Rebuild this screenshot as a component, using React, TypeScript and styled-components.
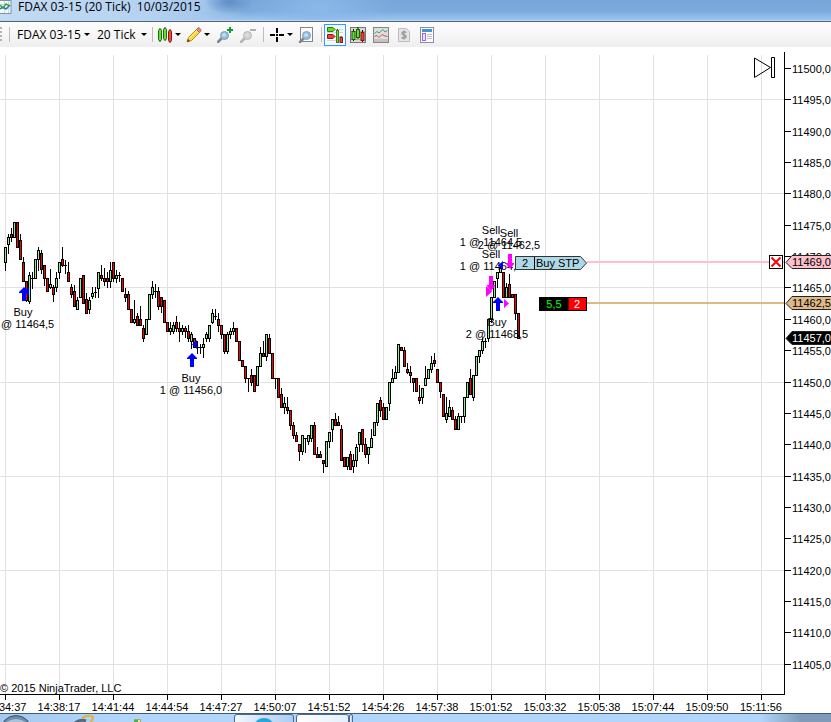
import React from "react";
import styled, { createGlobalStyle } from "styled-components";

const GlobalStyle = createGlobalStyle`
  *, *::before, *::after { box-sizing: border-box; }
  html, body { margin: 0; padding: 0; }
  body { background: #ffffff; overflow: hidden; }
  button, select { font: inherit; color: inherit; }
`;

const Window = styled.div`
  display: flex;
  flex-direction: column;
  height: 100vh;
  overflow: hidden;
  font-family: "Liberation Sans", Arial, sans-serif;
  font-size: 11px;
  color: #000000;
`;

/* ---------- title bar ---------- */

const TitleBar = styled.header`
  display: flex;
  align-items: center;
  gap: 6px;
  flex: none;
  height: 22px;
  padding-bottom: 7px;
  border-bottom: 1px solid #53647c;
  box-shadow: inset 0 -1px 0 #b9d7f3;
  background:
    radial-gradient(ellipse 24px 12px at 229px 2px, #5f8fc6 0%, rgba(95, 143, 198, 0) 100%),
    linear-gradient(90deg, #c3dbf3 0, #b4d2f1 150px, #a6c8ed 200px, rgba(150, 190, 233, 0) 245px),
    radial-gradient(ellipse 70px 30px at 320px 8px, #8bb9ea 0%, rgba(139, 185, 234, 0) 100%),
    linear-gradient(180deg, #7aa6da 0, #7caadd 11px, #9ac5ef 20px);
`;

const Title = styled.h1`
  margin: 0;
  font: 400 12px/14px "Open Sans", "Noto Sans", sans-serif;
  white-space: pre;
`;

/* ---------- toolbar ---------- */

const Toolbar = styled.nav`
  display: flex;
  align-items: center;
  flex: none;
  height: 25px;
  background: linear-gradient(180deg, #fcfcfc 0, #f7f7f7 12px, #eeeeee 25px);
  font: 400 12px/16px "Open Sans", "Noto Sans", sans-serif;
`;

const Grip = styled.span`
  width: 2px;
  height: 15px;
  margin-right: 7px;
  background: repeating-linear-gradient(180deg, #b4b4b4 0 2px, transparent 2px 4px);
`;

const Separator = styled.span<{ $before?: number }>`
  flex: none;
  width: 1px;
  height: 15px;
  margin-left: ${(p) => p.$before ?? 0}px;
  background: #bdbdbd;
`;

const Picker = styled.label<{ $width: number }>`
  display: grid;
  align-items: center;
  flex: none;
  width: ${(p) => p.$width}px;
  margin-left: 7px;

  > * { grid-area: 1 / 1; }
  > svg { justify-self: end; pointer-events: none; }
`;

const PickerSelect = styled.select`
  width: 100%;
  margin: 0;
  padding: 0;
  border: 0;
  appearance: none;
  background: transparent;
`;

const ToolButton = styled.button<{ $active?: boolean; $gap?: number }>`
  display: inline-flex;
  align-items: center;
  justify-content: center;
  gap: 2px;
  flex: none;
  min-width: 16px;
  height: 22px;
  margin: 0 0 0 ${(p) => p.$gap ?? 7}px;
  padding: 0 ${(p) => (p.$active ? 2 : 0)}px;
  border: ${(p) => (p.$active ? "1px solid #3399ff" : "0")};
  background: ${(p) => (p.$active ? "#f4f9ff" : "transparent")};
`;

const Caret = () => (
  <svg width="6" height="3" viewBox="0 0 6 3" aria-hidden="true">
    <path d="M0 0H6L3 3Z" fill="#000" />
  </svg>
);

const Icon = ({ children }: { children: React.ReactNode }) => (
  <svg width="16" height="16" viewBox="0 0 16 16" fill="none" aria-hidden="true">
    {children}
  </svg>
);

const LogoIcon = () => (
  <svg width="12" height="14" viewBox="0 0 12 14" fill="none" aria-hidden="true">
    <rect x="-3" y="0.5" width="14" height="13" fill="#f5f9fb" stroke="#7f93a6" />
    <path d="M0 4.5H11M0 8.5H11M4.5 1V13M8.500 1V13" stroke="#ccd8e0" />
    <path d="M0 9L3 7L6 9L10 5" stroke="#2f6fc4" strokeWidth="1.500" />
    <path d="M0 5L3 8L6 4L10 6" stroke="#3ca640" strokeWidth="1.500" />
  </svg>
);

const BarsIcon = () => (
  <Icon>
    <path d="M3 1V15M8 0V14M13 2V16" stroke="#222" />
    <rect x="1.500" y="2.500" width="3" height="11" rx="1" fill="#66e32c" stroke="#1f6d12" />
    <rect x="6.500" y="1.500" width="3" height="11" rx="1" fill="#66e32c" stroke="#1f6d12" />
    <rect x="11.500" y="3.500" width="3" height="11" rx="1" fill="#f04a40" stroke="#8a1712" />
  </Icon>
);

const PencilIcon = () => (
  <Icon>
    <path d="M1 15L2.500 10.500L10.500 2.500L13.500 5.500L5.500 13.500Z" fill="#ffd93b" stroke="#b38b18" />
    <path d="M3.500 11L11.500 3" stroke="#fff2a0" />
    <path d="M10.500 2.500L12 1Q13 .5 14 1.500L15 2.700Q15.300 3.500 13.500 5.500Z" fill="#ef8b83" stroke="#a9625c" />
    <path d="M1 15L2 12L4 14Z" fill="#444" />
  </Icon>
);

const Lens = ({ muted, x = 0 }: { muted?: boolean; x?: number }) => (
  <g transform={`translate(${x} 0)`}>
    <path d="M1 15L5 11" stroke={muted ? "#b5b5b5" : "#7d8790"} strokeWidth="2.500" strokeLinecap="round" />
    <circle cx="7.500" cy="8.500" r="4" fill={muted ? "#d2d2d2" : "#8fc1e8"} stroke={muted ? "#b8b8b8" : "#8c9bab"} />
    <circle cx="7" cy="8" r="1.800" fill={muted ? "#dddddd" : "#c2e2f8"} />
  </g>
);

const ZoomInIcon = () => (
  <Icon>
    <Lens />
    <path d="M13 0V6M10 3H16" stroke="#0aa22c" strokeWidth="2" />
  </Icon>
);

const ZoomOutIcon = () => (
  <Icon>
    <Lens muted />
    <path d="M10 3H16" stroke="#b0b0b0" strokeWidth="2" />
  </Icon>
);

const CrosshairIcon = () => (
  <Icon>
    <path d="M8 1V6M8 10V15M1 8H6M10 8H15" stroke="#000" strokeWidth="2" />
    <rect x="7" y="7" width="2" height="2" fill="#000" />
  </Icon>
);

const PageZoomIcon = () => (
  <Icon>
    <rect x="2.500" y=".5" width="12" height="14" fill="#fbfbfb" stroke="#858585" />
    <Lens x={1} />
  </Icon>
);

const TraderIcon = () => (
  <Icon>
    <path d="M6 2.500H16M0 5.500H16M6 9.500H16M0 13.500H16" stroke="#d6d6d6" />
    <path d="M.5 .5H6L8 2.500L6 4.500H.5Z" fill="#5fdf23" stroke="#277914" />
    <path d="M.5 7.500H6L8 9.500L6 11.500H.5Z" fill="#ef3f35" stroke="#8d1b15" />
    <path d="M10.500 2V16M14 9V16" stroke="#333" />
    <rect x="9.500" y="3.500" width="2" height="12" fill="#65df2b" stroke="#3b7c26" />
    <rect x="13" y="10.500" width="2.500" height="5" fill="#ef4a40" stroke="#8d1b15" />
  </Icon>
);

const FrameIcon = () => (
  <Icon>
    <rect x=".5" y=".5" width="15" height="15" fill="#d9d9d9" stroke="#777" />
    <path d="M1 4.500H15M1 8.500H15M1 12.500H15" stroke="#aaa" />
    <path d="M3.500 2V14M8 0V12M12.500 3V15" stroke="#111" />
    <rect x="2" y="4.500" width="3" height="8" fill="#61dd29" stroke="#185d0d" />
    <rect x="6.500" y="2.500" width="3" height="8" fill="#61dd29" stroke="#185d0d" />
    <rect x="11" y="5.500" width="3" height="8" fill="#ef4036" stroke="#7d1510" />
  </Icon>
);

const IndicatorIcon = () => (
  <Icon>
    <rect x=".5" y=".5" width="15" height="15" fill="#dedede" stroke="#858585" />
    <path d="M1 12H15V15H1Z" fill="#c3c3c3" />
    <path d="M1.500 6.500L4 4.500L6 6L10 2.500L12 5L14.500 3.500" stroke="#38a874" />
    <path d="M1.500 9.500L4 8.500L6 10.500L9 7.500L12 9L14.500 9.500" stroke="#e04c48" />
  </Icon>
);

const StrategyIcon = () => (
  <Icon>
    <path d="M2.500 1.500H10.500L13.500 4.500V14.500H2.500Z" fill="#e5e5e5" stroke="#bdbdbd" />
    <path d="M10.500 5.500Q8 3.800 6.300 5.500Q5.300 7.500 8 8Q11 8.500 9.700 10.500Q8 12 5.500 10.500M8 3.500V12.500" stroke="#9c9c9c" strokeWidth="1.500" />
  </Icon>
);

const PropertiesIcon = () => (
  <Icon>
    <rect x="1.500" y=".5" width="13" height="15" fill="#fbfbfd" stroke="#8a8fa3" />
    <rect x="3" y="2" width="10" height="3" fill="#3d97d2" />
    <rect x="3.500" y="6.500" width="3" height="7" fill="#efe5ff" stroke="#9a64ee" />
    <path d="M8 7.500H13M8 9.500H13M8 11.500H13" stroke="#b7bfcc" />
  </Icon>
);

/* ---------- chart ---------- */

const ChartArea = styled.main`
  display: grid;
  grid-template-columns: minmax(0, 1fr) 46px;
  grid-template-rows: minmax(0, 1fr) 18px;
  flex: 1;
  min-height: 0;
  padding-top: 5px;
  background: #ffffff;
`;

const Plot = styled.section`
  position: relative;
  overflow: hidden;
  border-right: 1px solid #000000;
  border-bottom: 1px solid #000000;
`;

const Drawing = styled.svg`
  display: block;
  width: 100%;
  height: 100%;
  overflow: hidden;
`;

const OverlayButton = styled.button<{ $top: number; $right: number }>`
  position: absolute;
  top: ${(p) => p.$top}px;
  right: ${(p) => p.$right}px;
  display: flex;
  padding: 0;
  border: 0;
  background: transparent;
`;

const TOP = 52;
const FIRST_X = 5;
const COLUMN = 54;

type Candle = [kind: "G" | "R", high: number, top: number, bottom: number, low: number];

const candles: Candle[] = [
  ["G", 247, 247, 262, 270], ["G", 234, 237, 244, 253], ["R", 228, 234, 237, 241], ["G", 222, 222, 237, 237],
  ["R", 222, 222, 247, 247], ["R", 234, 240, 259, 259], ["R", 257, 262, 281, 281], ["R", 281, 281, 300, 301],
  ["G", 272, 275, 301, 303], ["R", 272, 278, 278, 288], ["G", 259, 259, 278, 278], ["G", 247, 250, 259, 270],
  ["R", 250, 253, 269, 273], ["R", 265, 265, 278, 285], ["R", 278, 278, 291, 291], ["G", 269, 284, 287, 288],
  ["R", 285, 287, 294, 301], ["G", 272, 278, 287, 291], ["G", 262, 262, 272, 278], ["R", 247, 259, 265, 266],
  ["G", 260, 265, 265, 273], ["R", 262, 272, 281, 281], ["R", 284, 287, 294, 297], ["R", 285, 291, 306, 306],
  ["G", 297, 300, 309, 309], ["G", 278, 278, 297, 297], ["R", 275, 275, 303, 303], ["R", 293, 299, 313, 313],
  ["G", 297, 300, 309, 313], ["G", 287, 293, 296, 298], ["R", 287, 292, 292, 297], ["G", 272, 272, 288, 297],
  ["R", 265, 275, 278, 280], ["R", 268, 278, 281, 285], ["R", 272, 278, 281, 287], ["G", 262, 270, 281, 287],
  ["R", 262, 262, 278, 281], ["G", 270, 275, 278, 282], ["R", 272, 275, 275, 281], ["R", 278, 278, 291, 291],
  ["R", 288, 294, 297, 301], ["R", 291, 294, 309, 309], ["R", 309, 309, 322, 322], ["G", 300, 319, 322, 323],
  ["R", 313, 316, 325, 325], ["R", 306, 319, 325, 325], ["R", 325, 328, 338, 341], ["G", 319, 319, 334, 334],
  ["G", 294, 294, 319, 319], ["G", 281, 287, 294, 298], ["R", 284, 291, 291, 297], ["R", 287, 291, 306, 309],
  ["R", 297, 297, 306, 312], ["R", 300, 300, 322, 322], ["R", 322, 322, 331, 331], ["G", 322, 328, 331, 334],
  ["G", 322, 325, 331, 333], ["R", 316, 322, 328, 331], ["R", 322, 328, 331, 341], ["G", 325, 328, 331, 334],
  ["R", 326, 328, 331, 337], ["R", 325, 331, 338, 341], ["G", 332, 334, 341, 348], ["R", 338, 338, 347, 347],
  ["R", 341, 347, 347, 353], ["R", 344, 347, 347, 353], ["G", 338, 344, 347, 357], ["G", 332, 334, 338, 341],
  ["G", 325, 325, 338, 341], ["G", 309, 313, 322, 323], ["R", 309, 316, 316, 319], ["R", 313, 319, 325, 331],
  ["R", 325, 325, 334, 338], ["R", 334, 334, 351, 353], ["G", 332, 334, 351, 353], ["G", 328, 331, 334, 338],
  ["G", 322, 328, 331, 334], ["R", 328, 328, 341, 341], ["R", 341, 341, 360, 360], ["R", 360, 360, 366, 366],
  ["R", 366, 366, 378, 382], ["R", 378, 378, 378, 391], ["R", 369, 375, 382, 385], ["R", 375, 375, 391, 391],
  ["G", 366, 366, 385, 385], ["G", 347, 353, 366, 366], ["R", 341, 353, 356, 356], ["G", 334, 334, 356, 360],
  ["R", 334, 338, 353, 353], ["R", 353, 353, 378, 378], ["R", 378, 378, 378, 388], ["R", 378, 378, 397, 397],
  ["R", 388, 394, 407, 407], ["G", 397, 403, 407, 413], ["R", 397, 407, 410, 413], ["R", 410, 410, 425, 429],
  ["R", 422, 425, 435, 438], ["R", 432, 435, 441, 441], ["R", 444, 444, 451, 460], ["G", 435, 435, 451, 454],
  ["R", 438, 438, 438, 452], ["G", 435, 435, 441, 444], ["G", 425, 425, 438, 441], ["R", 422, 425, 454, 454],
  ["R", 447, 454, 457, 457], ["R", 451, 454, 457, 457], ["R", 460, 460, 463, 472], ["G", 441, 441, 466, 466],
  ["G", 432, 432, 441, 447], ["G", 419, 419, 429, 441], ["R", 413, 419, 425, 425], ["R", 416, 422, 425, 425],
  ["R", 425, 429, 460, 460], ["R", 457, 457, 466, 466], ["G", 457, 457, 466, 469], ["R", 451, 454, 469, 469],
  ["G", 454, 460, 466, 472], ["G", 444, 447, 460, 466], ["G", 432, 432, 444, 451], ["R", 429, 429, 444, 451],
  ["R", 438, 444, 454, 457], ["G", 447, 447, 454, 463], ["G", 429, 438, 447, 447], ["G", 422, 422, 435, 435],
  ["G", 403, 403, 422, 425], ["R", 397, 400, 410, 416], ["R", 403, 407, 419, 419], ["G", 407, 407, 419, 419],
  ["G", 382, 382, 403, 410], ["G", 369, 378, 382, 382], ["G", 366, 372, 378, 378], ["G", 344, 344, 372, 372],
  ["R", 347, 347, 350, 350], ["R", 347, 350, 366, 366], ["R", 363, 369, 372, 373], ["R", 366, 372, 375, 382],
  ["R", 378, 378, 382, 391], ["R", 378, 378, 391, 391], ["R", 385, 397, 400, 403], ["G", 388, 388, 397, 403],
  ["G", 366, 378, 385, 385], ["G", 369, 369, 378, 378], ["G", 356, 363, 369, 372], ["R", 353, 360, 363, 366],
  ["R", 369, 369, 382, 382], ["R", 382, 382, 391, 397], ["R", 394, 394, 416, 416], ["G", 397, 413, 419, 422],
  ["G", 400, 407, 416, 416], ["R", 407, 410, 419, 419], ["R", 416, 419, 429, 429], ["G", 413, 416, 429, 429],
  ["R", 416, 416, 416, 422], ["G", 397, 397, 416, 422], ["G", 382, 382, 397, 397], ["R", 369, 378, 394, 394],
  ["G", 375, 375, 397, 400], ["G", 356, 356, 375, 375], ["G", 350, 350, 356, 362], ["G", 338, 341, 350, 353],
  ["R", 338, 341, 341, 347], ["G", 319, 319, 338, 341], ["G", 297, 297, 319, 322], ["G", 281, 281, 297, 297],
  ["G", 272, 272, 278, 287], ["G", 265, 268, 272, 272], ["R", 272, 272, 297, 297], ["G", 283, 287, 297, 297],
  ["R", 274, 284, 297, 297], ["R", 294, 294, 297, 297], ["R", 294, 294, 313, 319], ["R", 313, 313, 338, 338],
];

const times = [
  "14:34:37", "14:38:17", "14:41:44", "14:44:54", "14:47:27", "14:50:07", "14:51:52", "14:54:26",
  "14:57:38", "15:01:52", "15:03:32", "15:05:38", "15:07:44", "15:09:50", "15:11:56",
];

const executions = [
  { x: 23, y: 316, side: "Buy", text: "1 @ 11464,5" },
  { x: 191, y: 382, side: "Buy", text: "1 @ 11456,0" },
  { x: 491, y: 234, side: "Sell", text: "1 @ 11464,5" },
  { x: 509, y: 237, side: "Sell", text: "2 @ 11462,5" },
  { x: 491, y: 258, side: "Sell", text: "1 @ 11464,5" },
  { x: 497, y: 326, side: "Buy", text: "2 @ 11468,5" },
];

const priceTags = [
  { y: 262, text: "11469,0", fill: "#ffc0cb", ink: "#000" },
  { y: 303, text: "11462,5", fill: "#deb887", ink: "#000" },
  { y: 338, text: "11457,0", fill: "#000", ink: "#fff" },
];

const priceY = (index: number) => Math.floor(68.5 + index * 31.35);

const CandleMark = ({ index, candle }: { index: number; candle: Candle }) => {
  const [kind, high, top, bottom, low] = candle;
  const x = FIRST_X + index * 3;
  return (
    <g>
      <rect x={x} y={high} width="1" height={low - high + 1} fill="#000" />
      <rect x={x - 1} y={top} width="3" height={bottom - top + 1} fill="#000" />
      {bottom - top > 1 && (
        <rect x={x} y={top + 1} width="1" height={bottom - top - 1} fill={kind === "G" ? "#90ee90" : "#ff0000"} />
      )}
    </g>
  );
};

const UpArrow = ({ x, y }: { x: number; y: number }) => (
  <path d={`M${x} ${y}l5 5v1h-3v8h-4v-8h-3v-1Z`} fill="#0000ff" />
);

const DownArrow = ({ x, y }: { x: number; y: number }) => (
  <path d={`M${x - 2} ${y}h4v9h2v1l-4 5l-4 -5v-1h2Z`} fill="#ff00ff" />
);

const PlotDrawing = () => (
  <Drawing role="img" aria-label="FDAX 03-15 price chart" fontSize="11">
    <g transform={`translate(0 ${-TOP})`}>
      <g stroke="#e1e1e1" shapeRendering="crispEdges">
        {Array.from({ length: 40 }, (_, i) => (
          <line key={i} x1={FIRST_X + i * COLUMN + 0.5} x2={FIRST_X + i * COLUMN + 0.5} y1={55} y2={4000} />
        ))}
        {Array.from({ length: 7 }, (_, i) => (
          <line key={i} x1="0" x2="100%" y1={priceY(1 + i * 3) + 0.5} y2={priceY(1 + i * 3) + 0.5} />
        ))}
      </g>
      <clipPath id="orders">
        <rect x="587" y="200" width="4000" height="200" />
      </clipPath>
      <rect x="0" y="261" width="100%" height="2" fill="#ffc0cb" clipPath="url(#orders)" />
      <rect x="0" y="302" width="100%" height="2" fill="#deb887" clipPath="url(#orders)" />
      <g shapeRendering="crispEdges">
        {candles.map((c, i) => (
          <CandleMark key={i} index={i} candle={c} />
        ))}
      </g>
      <g textAnchor="middle">
        {executions.map((e, i) => (
          <React.Fragment key={i}>
            <text x={e.x} y={e.y}>{e.side}</text>
            <text x={e.x} y={e.y + 12}>{e.text}</text>
          </React.Fragment>
        ))}
      </g>
      <UpArrow x={24} y={287} />
      <UpArrow x={192} y={353} />
      <UpArrow x={498} y={297} />
      <path d="M29 287V296L24 291.500ZM197 340V349L192 344.500ZM503 261V270L498 265.500Z" fill="#0000ff" />
      <DownArrow x={510} y={254} />
      <DownArrow x={491} y={276} />
      <path d="M486 286V297L492 291.500ZM504 299V308L509 303.500Z" fill="#ff00ff" />

      <path d="M515.500 256.500H580.500L586.500 263L580.500 269.500H515.500Z" fill="#add8e6" stroke="#333" />
      <path d="M534.500 257V269" stroke="#000" />
      <text x="525" y="267" textAnchor="middle">2</text>
      <text x="536" y="267">Buy STP</text>
      <rect x="539" y="297" width="29" height="14" fill="#000" />
      <rect x="568" y="297.500" width="18.500" height="13" fill="#ff0000" stroke="#000" />
      <text x="554" y="308" fill="#00ff00" textAnchor="middle">5,5</text>
      <text x="577" y="308" fill="#fff" textAnchor="middle">2</text>
    </g>
    <text x="0" y={692 - TOP}>© 2015 NinjaTrader, LLC</text>
  </Drawing>
);

const PriceAxis = () => (
  <Drawing role="img" aria-label="Price scale" fontSize="11">
    <g transform={`translate(0 ${-TOP})`}>
      {Array.from({ length: 20 }, (_, i) => (
        <g key={i}>
          <rect x="0" y={priceY(i)} width="6" height="1" fill="#000" />
          <text x="7" y={priceY(i) + 5}>{`${11500 - i * 5},0`}</text>
        </g>
      ))}
      {priceTags.map((t) => (
        <g key={t.text}>
          <path d={`M1 ${t.y + 0.5}L7 ${t.y - 6.5}H60V${t.y + 6.5}H7Z`} fill={t.fill} stroke="#222" />
          <text x="7" y={t.y + 4} fill={t.ink}>{t.text}</text>
        </g>
      ))}
    </g>
  </Drawing>
);

const TimeAxis = () => (
  <Drawing role="img" aria-label="Time scale" fontSize="11" textAnchor="middle">
    {times.map((t, i) => (
      <g key={t}>
        <rect x={FIRST_X + i * COLUMN} y="0" width="1" height="5" fill="#000" />
        <text x={FIRST_X + i * COLUMN} y="16">{t}</text>
      </g>
    ))}
  </Drawing>
);

/* ---------- task bar ---------- */

const TaskBar = styled.footer`
  display: flex;
  flex: none;
  height: 9px;
  overflow: hidden;
  border-top: 1px solid #3f5a7c;
  background: linear-gradient(90deg, #a5c9ef 0, #b2d5fb 120px, #b2d5fb calc(100% - 70px), #7f9bb9 calc(100% - 30px), #7f9bb9 100%);
`;

const TaskItem = styled.button<{ $width: number; $kind?: "framed" | "active" }>`
  display: flex;
  justify-content: center;
  flex: none;
  width: ${(p) => p.$width}px;
  height: 20px;
  padding: 0;
  border: ${(p) => (p.$kind ? "1px solid #4b6a8e" : "0")};
  border-radius: 3px;
  background: ${(p) =>
    p.$kind === "active"
      ? "linear-gradient(90deg, #ffffff, #e3effc)"
      : p.$kind === "framed"
        ? "linear-gradient(90deg, #f2f8ff, #a9cdf2)"
        : "transparent"};
`;

const TaskGap = styled.span`
  width: 2px;
`;

export default function App() {
  return (
    <Window>
      <GlobalStyle />
      <TitleBar>
        <LogoIcon />
        <Title>{"FDAX 03-15 (20 Tick)  10/03/2015"}</Title>
      </TitleBar>

      <Toolbar aria-label="Chart tools">
        <Grip />
        <Separator />
        <Picker $width={73}>
          <PickerSelect aria-label="Instrument" defaultValue="FDAX 03-15">
            <option>FDAX 03-15</option>
          </PickerSelect>
          <Caret />
        </Picker>
        <Picker $width={50}>
          <PickerSelect aria-label="Interval" defaultValue="20 Tick">
            <option>20 Tick</option>
          </PickerSelect>
          <Caret />
        </Picker>
        <Separator $before={5} />
        <ToolButton aria-label="Chart style" $gap={4}><BarsIcon /><Caret /></ToolButton>
        <ToolButton aria-label="Drawing tools" $gap={5}><PencilIcon /><Caret /></ToolButton>
        <ToolButton aria-label="Zoom in"><ZoomInIcon /></ToolButton>
        <ToolButton aria-label="Zoom out" disabled><ZoomOutIcon /></ToolButton>
        <Separator $before={7} />
        <ToolButton aria-label="Cursor" $gap={5}><CrosshairIcon /><Caret /></ToolButton>
        <ToolButton aria-label="Zoom window" $gap={5}><PageZoomIcon /></ToolButton>
        <Separator $before={7} />
        <ToolButton aria-label="Chart trader" $gap={2} $active><TraderIcon /></ToolButton>
        <ToolButton aria-label="Data series" $gap={4}><FrameIcon /></ToolButton>
        <ToolButton aria-label="Indicators"><IndicatorIcon /></ToolButton>
        <ToolButton aria-label="Strategies" disabled><StrategyIcon /></ToolButton>
        <ToolButton aria-label="Properties"><PropertiesIcon /></ToolButton>
      </Toolbar>

      <ChartArea>
        <Plot>
          <PlotDrawing />
          <OverlayButton aria-label="Return to last bar" $top={5} $right={8}>
            <svg width="22" height="22" viewBox="0 0 22 22" fill="none" stroke="#000" aria-hidden="true">
              <path d="M.5 1V20.500L16.500 10.500Z" />
              <path d="M17.500 .5H20.500V20.500H17.500Z" />
            </svg>
          </OverlayButton>
          <OverlayButton aria-label="Cancel order" $top={203} $right={1}>
            <svg width="14" height="14" viewBox="0 0 14 14" aria-hidden="true">
              <rect x=".5" y=".5" width="13" height="13" fill="#fff" stroke="#000" />
              <path d="M2.500 2.500L11.500 11.500M11.500 2.500L2.500 11.500" stroke="#ff0000" strokeWidth="2" />
            </svg>
          </OverlayButton>
        </Plot>
        <PriceAxis />
        <TimeAxis />
      </ChartArea>

      <TaskBar>
        <TaskItem $width={34} aria-label="Start">
          <svg width="34" height="9" viewBox="0 0 34 9" aria-hidden="true">
            <circle cx="16" cy="17" r="15.500" fill="#6e8cab" stroke="#38536f" />
            <path d="M5 9Q16 1 27 9Z" fill="#a9c1d8" />
          </svg>
        </TaskItem>
        <TaskItem $width={100} aria-label="Browser">
          <svg width="24" height="9" viewBox="0 0 24 9" fill="none" aria-hidden="true">
            <path d="M3 9Q8 5 14 7" stroke="#56697c" strokeWidth="3" />
            <path d="M10 4Q18 0 21 3Q21 6 18 9" stroke="#e3b13c" strokeWidth="2" />
          </svg>
        </TaskItem>
        <TaskItem $width={100} aria-label="Explorer">
          <svg width="100" height="9" viewBox="0 0 100 9" aria-hidden="true">
            <path d="M-8 9V5.500H6.500V9Z" fill="#f4e4a1" stroke="#b6a25c" />
            <rect x="0" y="6" width="4" height="3" fill="#4caf50" />
          </svg>
        </TaskItem>
        <TaskItem $width={60} $kind="framed" aria-label="Messenger">
          <svg width="24" height="9" viewBox="0 0 24 9" aria-hidden="true">
            <circle cx="12" cy="14" r="11" fill="#2aa5de" />
          </svg>
        </TaskItem>
        <TaskGap />
        <TaskItem $width={53} $kind="active" aria-label="NinjaTrader" />
        <TaskItem $width={4} $kind="framed" aria-label="More windows" />
      </TaskBar>
    </Window>
  );
}
